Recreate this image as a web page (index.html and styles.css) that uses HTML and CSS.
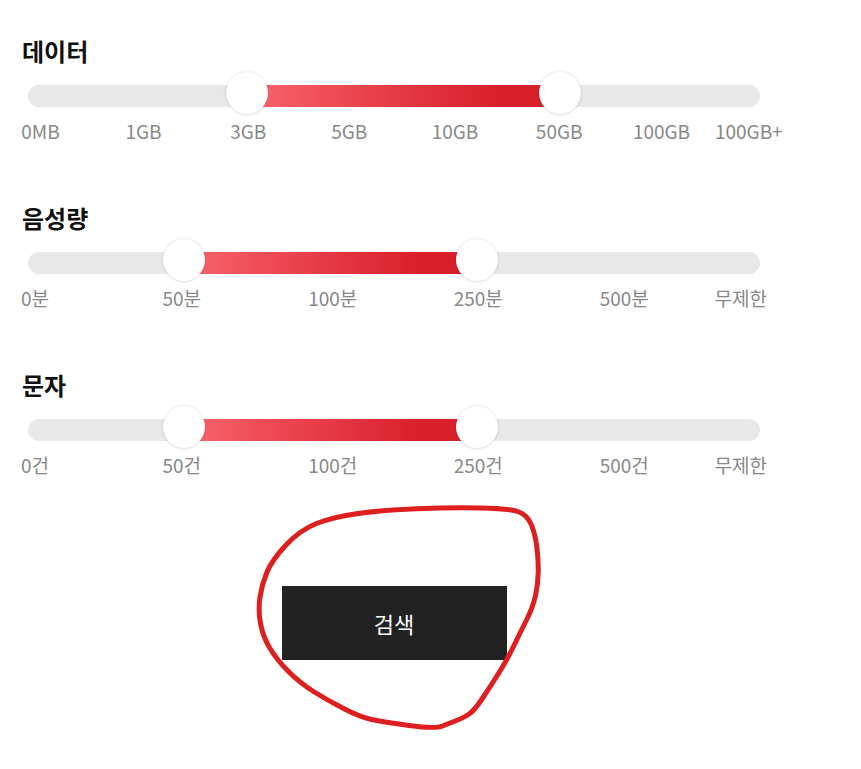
FILE: index.html
```html
<!DOCTYPE html>
<html lang="ko">
<head>
<meta charset="utf-8">
<title>요금제 검색</title>
<link rel="stylesheet" href="styles.css">
</head>
<body>
<main class="wrap">
  <section class="filter">
    <h2 class="filter-title">데이터</h2>
    <div class="track">
      <div class="fill" style="left:219px;width:312.5px"></div>
      <span class="thumb" style="left:198px"></span>
      <span class="thumb" style="left:510.5px"></span>
    </div>
    <div class="ticks">
      <span class="tick" style="left:12.5px">0MB</span>
      <span class="tick" style="left:115.5px">1GB</span>
      <span class="tick" style="left:220.2px">3GB</span>
      <span class="tick" style="left:321.2px">5GB</span>
      <span class="tick" style="left:427px">10GB</span>
      <span class="tick" style="left:531.2px">50GB</span>
      <span class="tick" style="left:633.5px">100GB</span>
      <span class="tick" style="left:720.8px">100GB+</span>
    </div>
  </section>

  <section class="filter">
    <h2 class="filter-title">음성량</h2>
    <div class="track">
      <div class="fill" style="left:156px;width:293px"></div>
      <span class="thumb" style="left:135px"></span>
      <span class="thumb" style="left:428px"></span>
    </div>
    <div class="ticks">
      <span class="tick" style="left:7px">0분</span>
      <span class="tick" style="left:153.7px">50분</span>
      <span class="tick" style="left:304.7px">100분</span>
      <span class="tick" style="left:450.3px">250분</span>
      <span class="tick" style="left:596.2px">500분</span>
      <span class="tick" style="left:712.8px">무제한</span>
    </div>
  </section>

  <section class="filter">
    <h2 class="filter-title">문자</h2>
    <div class="track">
      <div class="fill" style="left:156px;width:293px"></div>
      <span class="thumb" style="left:135px"></span>
      <span class="thumb" style="left:428px"></span>
    </div>
    <div class="ticks">
      <span class="tick" style="left:7px">0건</span>
      <span class="tick" style="left:153.7px">50건</span>
      <span class="tick" style="left:304.7px">100건</span>
      <span class="tick" style="left:450.3px">250건</span>
      <span class="tick" style="left:596.2px">500건</span>
      <span class="tick" style="left:712.8px">무제한</span>
    </div>
  </section>

  <div class="actions">
    <button class="search-btn" type="button">검색</button>
  </div>
</main>

<svg class="annotation" width="861" height="769" viewBox="0 0 861 769" aria-hidden="true">
  <path d="M416.5 508.75 Q450 507.5 480 508 Q510 508.5 518.5 511.75 Q527 515 531 524 Q535 533 536.75 546.5 Q538.5 560 538.25 572 Q538 584 535.5 595.5 Q533 607 526.5 620 Q520 633 513.5 646.5 Q507 660 498.5 673.5 Q490 687 482 699 Q474 711 468.5 714.5 Q463 718 456.5 720.5 Q450 723 442.5 726 Q435 729 409 725.5 Q383 722 371.5 719.5 Q360 717 343.5 708.5 Q327 700 313.5 691.5 Q300 683 288.5 671.5 Q277 660 270 648.5 Q263 637 260.5 623.5 Q258 610 260 597 Q262 584 267 572 Q272 560 286 545 Q300 530 316.5 523.5 Q333 517 358 513.5 Q383 510 416.5 508.75 Z" fill="none" stroke="#de1f1f" stroke-width="5" stroke-linejoin="round" stroke-linecap="round"/>
</svg>
</body>
</html>
```

FILE: styles.css
```css
html, body {
  margin: 0;
  padding: 0;
  background: #ffffff;
}

body {
  position: relative;
  width: 861px;
  height: 769px;
  overflow: hidden;
  font-family: "Noto Sans CJK KR", "Noto Sans", sans-serif;
  color: #111111;
}

.wrap {
  width: 732px;
  margin-left: 28px;
  padding-top: 34px;
}

.filter + .filter {
  margin-top: 58px;
}

.filter-title {
  margin: 0 0 0 -6px;
  font-size: 24px;
  line-height: 34px;
  font-weight: 700;
  color: #111111;
}

.track {
  position: relative;
  margin-top: 17px;
  height: 22px;
  border-radius: 11px;
  background: #e8e8e8;
}

.fill {
  position: absolute;
  top: 0;
  bottom: 0;
  background: linear-gradient(90deg, #f8666f 0%, #f05059 22%, #e3343e 55%, #d9202a 80%, #d91f29 100%);
}

.thumb {
  position: absolute;
  top: -13px;
  width: 42px;
  height: 42px;
  border-radius: 50%;
  background: #ffffff;
  box-shadow: 0 0 3px rgba(0, 0, 0, 0.15), 0 1px 2px rgba(0, 0, 0, 0.06);
}

.ticks {
  position: relative;
  margin-top: 12px;
  height: 24px;
}

.tick {
  position: absolute;
  top: 0;
  transform: translateX(-50%);
  white-space: nowrap;
  font-size: 19px;
  line-height: 24px;
  color: #888888;
}

.actions {
  display: flex;
  justify-content: center;
  margin-top: 109px;
}

.search-btn {
  width: 225px;
  height: 74px;
  border: 0;
  border-radius: 0;
  padding: 0;
  background: #222222;
  color: #ffffff;
  font-family: "Noto Sans CJK KR", "Noto Sans", sans-serif;
  font-size: 22px;
  font-weight: 400;
  cursor: pointer;
}

.annotation {
  position: absolute;
  top: 0;
  left: 0;
  pointer-events: none;
}
```
